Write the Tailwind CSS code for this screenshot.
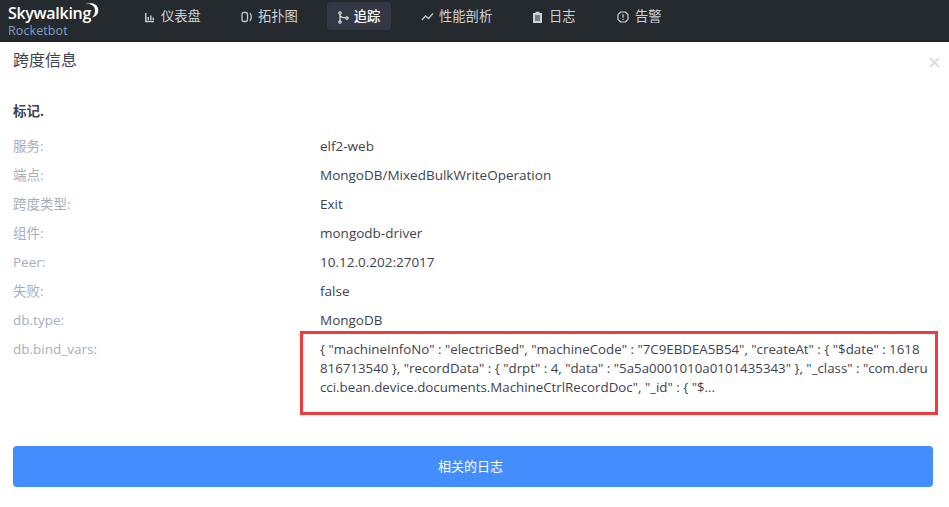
<!DOCTYPE html>
<html lang="en">
<head>
    <meta charset="UTF-8">
    <title>Rocketbot</title>
    <script src="https://cdn.jsdelivr.net/npm/@tailwindcss/browser@4"></script>
</head>
<body class="w-[949px] h-[507px] overflow-hidden bg-white text-[13.5px] text-[#3d444f] font-['Open_Sans','Noto_Sans_CJK_SC',sans-serif]">

    <!-- Header -->
    <header class="h-[42px] bg-[#252a2f] border-b-2 border-[#1f2327] flex items-start text-[#d0d3d6]">
        <div class="w-[133px] pl-2 shrink-0 relative h-full">
            <div class="text-[16px] leading-[16px] pt-[5px] text-white font-semibold tracking-[-0.3px]">Skywalking</div>
            <div class="text-[12.5px] leading-[14px] mt-[3px] text-[#7f9fc2] tracking-[0.1px]">Rocketbot</div>
            <svg class="absolute left-[81px] top-[2px]" width="18" height="17" viewBox="0 0 18 16"><path d="M2 3C7 0 14 2 14 8c0 3-1 5-3 7 5-1 7-5 6-9-1-5-8-7-15-3z" fill="#fff"/></svg>
        </div>
        <nav class="flex items-center mt-[2px] text-[13.3px]">
            <a class="w-[75px] h-[28px] pt-[2px] flex items-center pl-[11px] gap-[5px]">
                <svg width="12" height="12" viewBox="0 0 12 12" fill="#c5c8cb"><path d="M1 2h1.500v8H10v1.200H1z"/><path d="M3.500 6H5v3.500H3.500zM6 4.500h1.500v5H6zM8.500 6.500H10v3H8.500z"/></svg>
                <span>仪表盘</span>
            </a>
            <div class="w-[33px]"></div>
            <a class="w-[76px] h-[28px] pt-[2px] flex items-center gap-[5px]">
                <svg width="12" height="12" viewBox="0 0 12 12" fill="none" stroke="#c5c8cb" stroke-width="1.300"><rect x="1" y="1.500" width="5.500" height="9" rx="1.800"/><path d="M9 2c1.500 2.300 1.500 5.700 0 8"/></svg>
                <span>拓扑图</span>
            </a>
            <div class="w-[10px]"></div>
            <a class="w-[64px] h-[28px] pt-[2px] flex items-center justify-center gap-[5px] rounded bg-[#333844] text-white font-medium">
                <svg width="11" height="13" viewBox="0 0 11 13" fill="none" stroke="#e4e6e8" stroke-width="1.200"><circle cx="2" cy="2" r="1.200"/><circle cx="2" cy="11" r="1.200"/><circle cx="9" cy="7" r="1.200"/><path d="M2 3.200v6.600M2.500 5c1 1.500 3 2 5.300 2"/></svg>
                <span>追踪</span>
            </a>
            <div class="w-[30px]"></div>
            <a class="w-[100px] h-[28px] pt-[2px] flex items-center gap-[5px]">
                <svg width="13" height="10" viewBox="0 0 13 10" fill="none" stroke="#c5c8cb" stroke-width="1.300"><path d="M1 8l3.500-4 3 2.500L12 1.500"/></svg>
                <span>性能剖析</span>
            </a>
            <div class="w-[11px]"></div>
            <a class="w-[74px] h-[28px] pt-[2px] flex items-center gap-[6px]">
                <svg width="11" height="12" viewBox="0 0 11 12"><path d="M1 2h2.500V.800h4V2H10v10H1z" fill="#d0d3d6"/><path d="M3 5h5M3 7h5M3 9h5" stroke="#252a2f"/></svg>
                <span>日志</span>
            </a>
            <div class="w-[11px]"></div>
            <a class="h-[28px] pt-[2px] flex items-center gap-[6px]">
                <svg width="12" height="12" viewBox="0 0 12 12" fill="none" stroke="#d0d3d6" stroke-width="1.200"><path d="M3.700 1h4.600L11 3.700v4.600L8.300 11H3.700L1 8.300V3.700z" stroke-linejoin="round"/><path d="M6 3.200v3.500M6 7.800v1.200"/></svg>
                <span>告警</span>
            </a>
        </nav>
    </header>

    <!-- Span info -->
    <main class="relative px-[13px]">
        <div class="flex items-center justify-between h-[36px]">
            <h2 class="text-[16px] text-[#3d444f]">跨度信息</h2>
            <svg class="mt-[4px] mr-[-4px]" width="11" height="11" viewBox="0 0 11 11" stroke="#d9dbde" stroke-width="1.800"><path d="M1 1l9 9M10 1l-9 9"/></svg>
        </div>

        <h5 class="mt-[23px] h-[20px] leading-[20px] font-bold">标记.</h5>

        <dl class="mt-[11px] text-[#3d444f]">
            <div class="flex h-[29px] leading-[29px]"><dt class="w-[307px] text-[#a7aebb]">服务:</dt><dd>elf2-web</dd></div>
            <div class="flex h-[29px] leading-[29px]"><dt class="w-[307px] text-[#a7aebb]">端点:</dt><dd>MongoDB/MixedBulkWriteOperation</dd></div>
            <div class="flex h-[29px] leading-[29px]"><dt class="w-[307px] text-[#a7aebb]">跨度类型:</dt><dd>Exit</dd></div>
            <div class="flex h-[29px] leading-[29px]"><dt class="w-[307px] text-[#a7aebb]">组件:</dt><dd>mongodb-driver</dd></div>
            <div class="flex h-[29px] leading-[29px]"><dt class="w-[307px] text-[#a7aebb]">Peer:</dt><dd>10.12.0.202:27017</dd></div>
            <div class="flex h-[29px] leading-[29px]"><dt class="w-[307px] text-[#a7aebb]">失败:</dt><dd>false</dd></div>
            <div class="flex h-[29px] leading-[29px]"><dt class="w-[307px] text-[#a7aebb]">db.type:</dt><dd>MongoDB</dd></div>
            <div class="flex leading-[19px] pt-[5px]">
                <dt class="w-[307px] text-[#a7aebb]">db.bind_vars:</dt>
                <dd class="w-[613px] whitespace-nowrap text-[13.3px]">{ "machineInfoNo" : "electricBed", "machineCode" : "7C9EBDEA5B54", "createAt" : { "$date" : 1618<br>816713540 }, "recordData" : { "drpt" : 4, "data" : "5a5a0001010a0101435343" }, "_class" : "com.deru<br>cci.bean.device.documents.MachineCtrlRecordDoc", "_id" : { "$...</dd>
            </div>
        </dl>

        <!-- annotation box drawn over the screenshot -->
        <div class="absolute left-[300px] top-[289px] w-[638px] h-[84px] border-[3px] border-[#f33a3a]"></div>

        <button class="block w-[920px] h-[41px] mt-[49px] pr-[5px] pt-[1px] rounded bg-[#448dfe] text-white text-[13px]">相关的日志</button>
    </main>
</body>
</html>
